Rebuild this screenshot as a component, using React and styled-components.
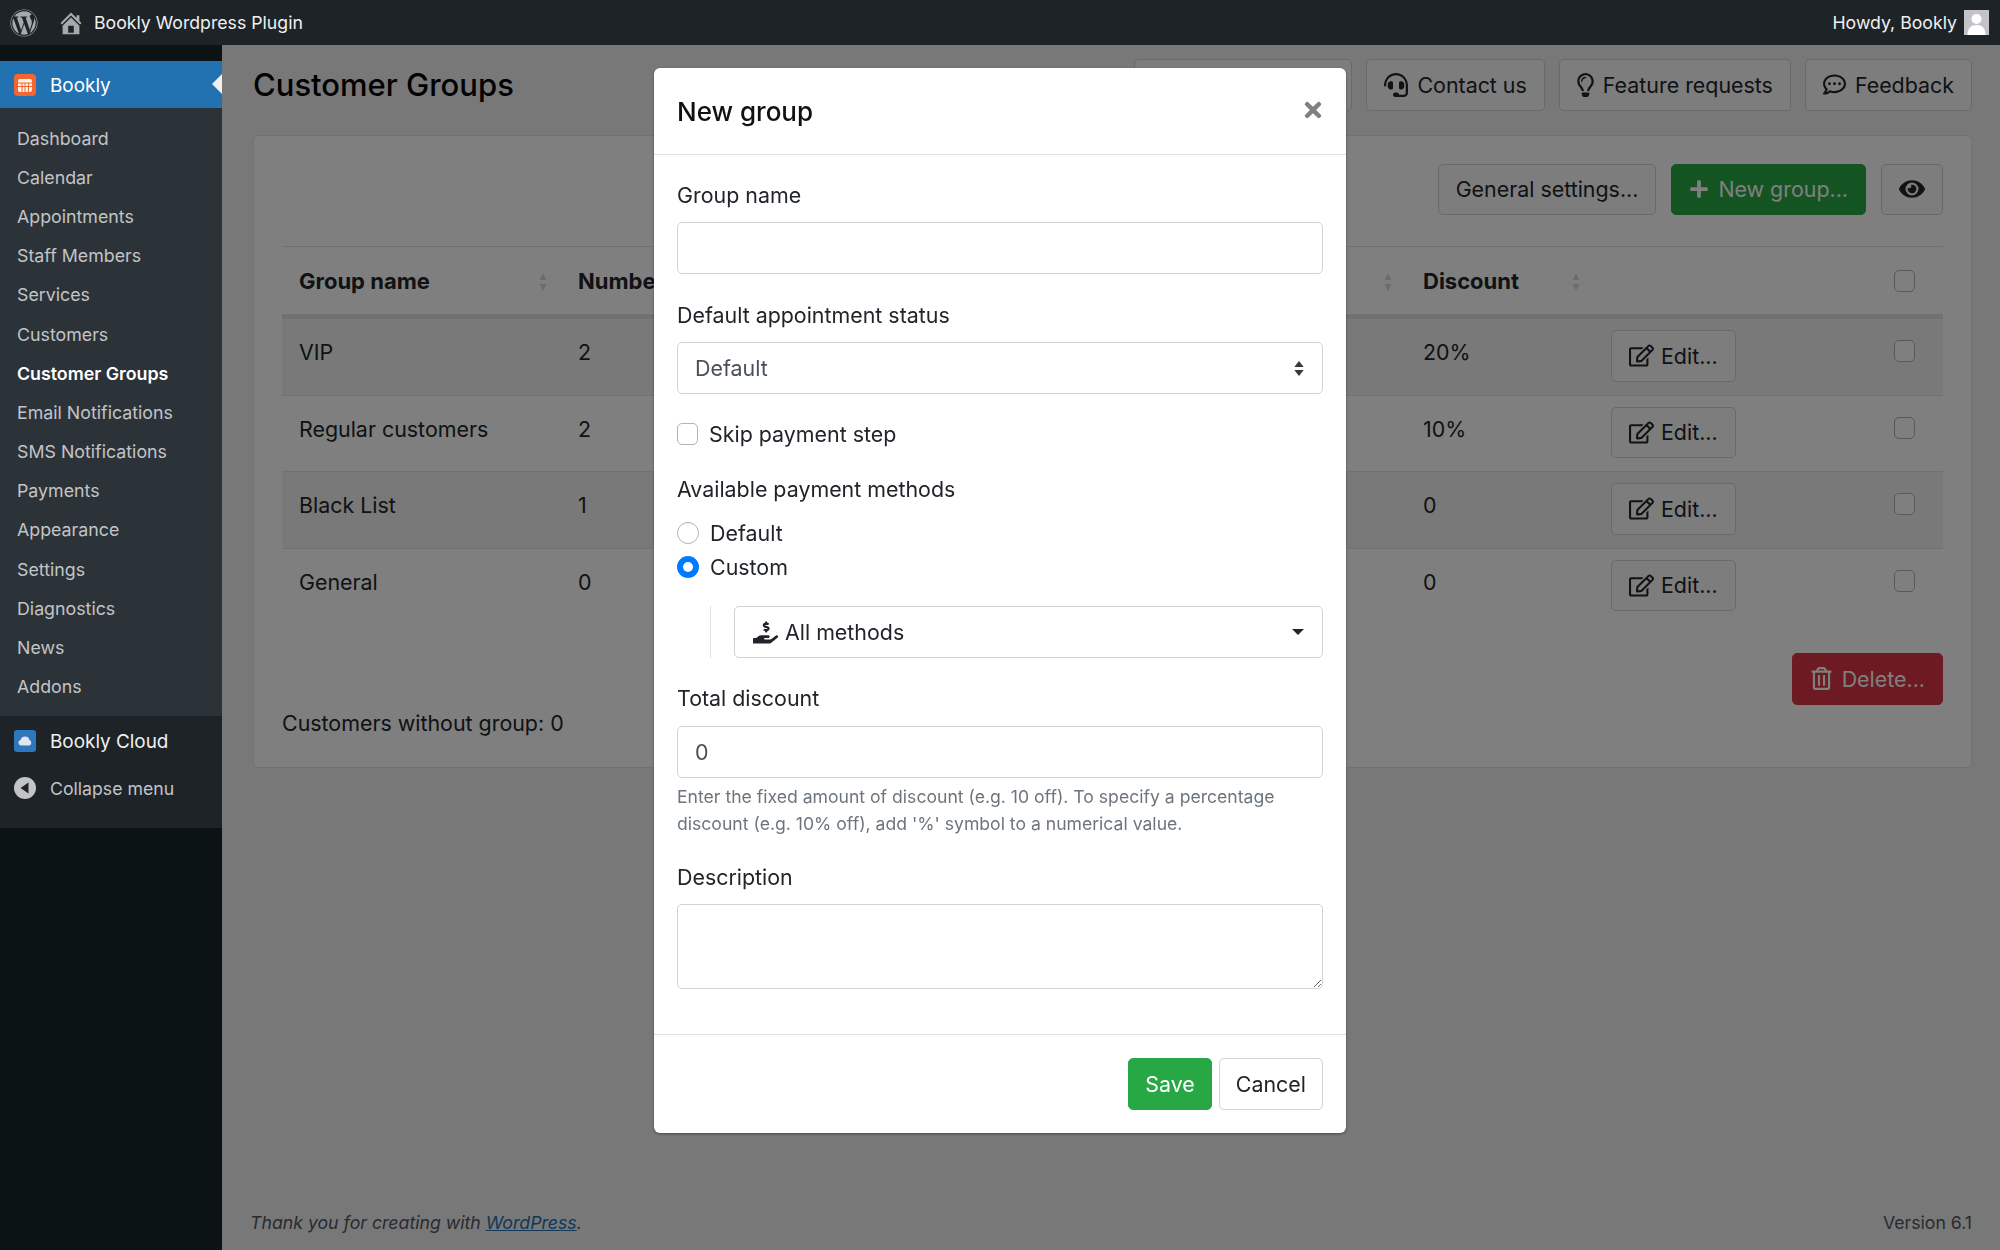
import React from 'react'
import styled, { createGlobalStyle } from 'styled-components'
import {
  FaWordpress, FaHeadset, FaRegLightbulb, FaRegCommentDots, FaEye, FaPlus,
  FaRegEdit, FaRegTrashAlt, FaHandHoldingUsd, FaTimes, FaBook
} from 'react-icons/fa'

const GlobalStyle = createGlobalStyle`
  * { box-sizing: border-box; }
  html, body { margin: 0; padding: 0; }
  body {
    background: #f0f0f1;
    font-family: Inter, "Liberation Sans", sans-serif;
    color: #212529;
    font-size: 21.4px;
  }
`

const Page = styled.div`
  width: 2000px;
  height: 1250px;
  display: flex;
  flex-direction: column;
  overflow: hidden;
`

// top bar
const AdminBar = styled.header`
  height: 45px;
  flex: none;
  background: #1d2327;
  color: #f0f0f1;
  display: flex;
  align-items: center;
  padding: 0 11px 0 10px;
  font-size: 17.7px;
  z-index: 3;
`
const WpLogo = styled(FaWordpress)`
  width: 28px;
  height: 28px;
  color: #a7aaad;
`
const HomeIcon = styled.svg`
  width: 28px;
  height: 28px;
  margin: 0 9px 0 19px;
`
const Howdy = styled.span`
  margin-left: auto;
  margin-right: 7px;
`
const Avatar = styled.span`
  width: 25px;
  height: 25px;
  background: #c3c4c7;
  display: block;
`

const Body = styled.div`
  flex: 1;
  display: flex;
  min-height: 0;
`

// left menu
const Sidebar = styled.aside`
  width: 222px;
  flex: none;
  background: #0c1315;
  padding-top: 16px;
  z-index: 3;
  display: flex;
  flex-direction: column;
`
const TopItem = styled.div`
  height: 47px;
  background: #2271b1;
  color: #fff;
  display: flex;
  align-items: center;
  padding: 1px 0 0 14px;
  gap: 14px;
  font-size: 18.9px;
  position: relative;
  &::after {
    content: '';
    position: absolute;
    right: 0;
    top: 13px;
    border: 10.5px solid transparent;
    border-right-color: #f0f0f1;
    border-left-width: 0;
  }
`
const SubMenu = styled.nav`
  background: #2c3338;
  padding: 10.5px 0 9.5px;
  display: flex;
  flex-direction: column;
`
const SubItem = styled.a`
  height: 39.2px;
  display: flex;
  align-items: center;
  padding-left: 17px;
  font-size: 17.8px;
  color: ${p => (p.$current ? '#fff' : '#c3c4c7')};
  font-weight: ${p => (p.$current ? 600 : 400)};
`
const LowerMenu = styled.div`
  background: #1d2327;
  height: 112px;
  padding-top: 3px;
`
const LowerItem = styled.div`
  height: ${p => (p.$main ? '45px' : '49px')};
  display: flex;
  align-items: center;
  padding-left: 14px;
  gap: 14px;
  font-size: ${p => (p.$main ? '18.9px' : '17.7px')};
  color: ${p => (p.$main ? '#f0f0f1' : '#c3c4c7')};
`
const MenuIcon = styled.svg`
  width: 22px;
  height: 22px;
  flex: none;
`

// main area
const Main = styled.main`
  flex: 1;
  min-width: 0;
  padding: 14px 28px 0 31px;
  display: flex;
  flex-direction: column;
`
const TopRow = styled.div`
  display: flex;
  align-items: center;
  justify-content: space-between;
`
const Title = styled.h1`
  margin: 0;
  font-size: 31px;
  font-weight: 500;
  color: #000;
`
const TopButtons = styled.div`
  display: flex;
  gap: 14px;
`
const Button = styled.button`
  height: 51.5px;
  padding: 0 ${p => p.$pad || 17}px;
  display: inline-flex;
  align-items: center;
  gap: ${p => p.$gap || 9}px;
  font: inherit;
  font-size: 21.4px;
  color: ${p => (p.$variant === 'success' || p.$variant === 'danger' ? '#fff' : '#212529')};
  background: ${p =>
    p.$variant === 'success' ? '#28a745' : p.$variant === 'danger' ? '#dc3545' : p.$variant === 'plain' ? '#fff' : '#fafafa'};
  border: 1px solid ${p =>
    p.$variant === 'success' ? '#28a745' : p.$variant === 'danger' ? '#dc3545' : '#ced4da'};
  border-radius: 5px;
  svg { flex: none; }
`
const BulbIcon = styled(FaRegLightbulb)`
  width: 17px;
  height: 24px;
`
const Card = styled.section`
  margin-top: 24px;
  background: #fff;
  border: 1px solid #dee2e6;
  border-radius: 5px;
  padding: 28px 28px 28px;
`
const Toolbar = styled.div`
  display: flex;
  justify-content: flex-end;
  gap: 15px;
`
const Table = styled.table`
  width: 100%;
  margin-top: 31px;
  border-collapse: separate;
  border-spacing: 0;
  table-layout: fixed;
`
const HeadCell = styled.th`
  height: 72px;
  padding: 0 17px;
  text-align: left;
  font-size: 22px;
  font-weight: 700;
  white-space: nowrap;
  border-top: 1px solid #dee2e6;
  border-bottom: 4px solid #dee2e6;
  position: relative;
`
const Cell = styled.td`
  height: 76.5px;
  padding: 20px 17px 0;
  line-height: 26px;
  vertical-align: top;
  border-top: 1px solid #dee2e6;
`
const ActionCell = styled(Cell)`
  padding-top: 11px;
`
const CheckCell = styled(Cell)`
  padding: 21px 28px 0 0;
`
const Row = styled.tr`
  background: ${p => (p.$odd ? '#f2f2f2' : 'transparent')};
`
const SortMark = styled.svg`
  position: absolute;
  right: 14px;
  top: 25px;
  width: 8px;
  height: 20px;
`
const Checkbox = styled.input.attrs({ type: 'checkbox' })`
  appearance: none;
  display: block;
  width: 21px;
  height: 22px;
  margin: 0;
  background: #fff;
  border: 1px solid #adb5bd;
  border-radius: 5px;
  flex: none;
`
const RightCheck = styled(Checkbox)`
  margin-left: auto;
  margin-right: ${p => p.$inset || 0}px;
`
const BulkRow = styled.div`
  display: flex;
  justify-content: flex-end;
  margin-top: 29px;
`
const Summary = styled.div`
  height: 31px;
  line-height: 31px;
  margin-top: 3px;
`
const PageFooter = styled.footer`
  margin-top: auto;
  margin-left: -3px;
  padding-bottom: 17px;
  display: flex;
  justify-content: space-between;
  font-size: 17.7px;
  color: #50575e;
  em a { color: #2271b1; }
`

// modal
const Backdrop = styled.div`
  position: fixed;
  left: 222px;
  top: 45px;
  right: 0;
  bottom: 0;
  background: rgba(0, 0, 0, 0.5);
  z-index: 1;
`
const ModalLayer = styled.div`
  position: fixed;
  inset: 0;
  display: flex;
  justify-content: center;
  align-items: flex-start;
  padding-top: 68px;
  z-index: 2;
`
const Modal = styled.div`
  width: 692px;
  height: 1065px;
  background: #fff;
  border-radius: 6px;
  display: flex;
  flex-direction: column;
  box-shadow: 0 1px 3px rgba(0, 0, 0, 0.4);
`
const ModalHeader = styled.div`
  height: 87px;
  flex: none;
  padding: 0 23px;
  display: flex;
  align-items: center;
  justify-content: space-between;
  border-bottom: 1px solid #dee2e6;
`
const ModalTitle = styled.h2`
  margin: 0;
  font-size: 26px;
  font-weight: 500;
  color: #111;
`
const CloseIcon = styled(FaTimes)`
  width: 22px;
  height: 24px;
  color: #808080;
  margin-top: -3px;
  margin-right: -1px;
`
const ModalBody = styled.div`
  flex: 1;
  padding: 24.5px 23px 0;
`
const Label = styled.div`
  height: 31px;
  line-height: 31px;
  margin-bottom: ${p => p.$gap ?? 11.5}px;
`
const Group = styled.div`
  margin-bottom: ${p => p.$gap ?? 25.5}px;
`
const Control = styled.input`
  display: block;
  width: 100%;
  height: 52px;
  padding: 0 17px;
  font: inherit;
  color: #495057;
  background: #fff;
  border: 1px solid #ced4da;
  border-radius: 5px;
`
const Select = styled.select`
  display: block;
  width: 100%;
  height: 52px;
  padding: 0 17px;
  font: inherit;
  color: #495057;
  appearance: none;
  border: 1px solid #ced4da;
  border-radius: 5px;
  background: #fff url("data:image/svg+xml,%3csvg xmlns='http://www.w3.org/2000/svg' viewBox='0 0 10 16'%3e%3cpath fill='%23343a40' d='M5 0 10 6.5H0zM5 16 0 9.5h10z'/%3e%3c/svg%3e") no-repeat right 18px center / 10px 15px;
`
const CheckLine = styled.label`
  height: 27px;
  margin-top: ${p => p.$top || 0}px;
  display: flex;
  align-items: center;
  gap: 11px;
`
const Radio = styled.input.attrs({ type: 'radio' })`
  appearance: none;
  display: block;
  width: 22px;
  height: 22px;
  margin: 0;
  flex: none;
  border-radius: 50%;
  background: #fff;
  border: 1px solid #adb5bd;
  &:checked {
    background: #fff;
    border: 6.5px solid #007bff;
  }
`
const Indented = styled.div`
  display: flex;
  margin: 25.5px 0 24.5px 33px;
  padding-left: 23px;
  border-left: 1px solid #dee2e6;
`
const DropdownButton = styled.button`
  width: 100%;
  height: 52px;
  padding: 0 18px;
  display: flex;
  align-items: center;
  gap: 7px;
  font: inherit;
  color: #212529;
  background: #fff;
  border: 1px solid #ced4da;
  border-radius: 5px;
  &::after {
    content: '';
    margin-left: auto;
    border-top: 6px solid #212529;
    border-left: 6px solid transparent;
    border-right: 6px solid transparent;
  }
`
const Hint = styled.p`
  margin: 6px 0 0;
  font-size: 17.6px;
  line-height: 26.6px;
  color: #6c757d;
`
const TextArea = styled.textarea`
  display: block;
  width: 100%;
  height: 85px;
  font: inherit;
  border: 1px solid #ced4da;
  border-radius: 5px;
`
const ModalFooter = styled.div`
  height: 99px;
  flex: none;
  padding: 23px 23px 0;
  display: flex;
  justify-content: flex-end;
  align-items: flex-start;
  gap: 7px;
  border-top: 1px solid #dee2e6;
`

const Sort = () => (
  <SortMark viewBox="0 0 8 20">
    <path fill="#d8d8d8" d="M4 1 7.5 8H.5zM4 19 .5 12h7z" />
  </SortMark>
)

const BooklyIcon = () => (
  <MenuIcon viewBox="0 0 22 22">
    <rect width="22" height="22" rx="4" fill="#f4662f" />
    <rect x="4" y="5" width="14" height="13" rx="2" fill="#fff" opacity="0.9" />
    <path stroke="#f4662f" strokeWidth="1" d="M4 9h14M4 12.5h14M8 9v9M11 9v9M14.5 9v9" />
  </MenuIcon>
)
const CloudIcon = () => (
  <MenuIcon viewBox="0 0 22 22">
    <rect width="22" height="22" rx="3" fill="#2f77bc" />
    <path fill="#dfe6ee" d="M7 15.5a2.8 2.8 0 0 1-.5-5.5A4.6 4.6 0 0 1 11 6.5a4.3 4.3 0 0 1 4.4 3.6 2.8 2.8 0 0 1-.4 5.4z" />
  </MenuIcon>
)
const CollapseIcon = () => (
  <MenuIcon viewBox="0 0 22 22">
    <circle cx="11" cy="11" r="11" fill="#c3c4c7" />
    <path fill="#1d2327" d="M14.5 5.5v11L6.5 11z" />
  </MenuIcon>
)
const AvatarIcon = () => (
  <svg viewBox="0 0 25 25" width="25" height="25">
    <circle cx="12.5" cy="9" r="5" fill="#fff" />
    <path fill="#fff" d="M3.5 25c0-7 3.5-10 9-10s9 3 9 10z" />
  </svg>
)

const menu = [
  'Dashboard', 'Calendar', 'Appointments', 'Staff Members', 'Services', 'Customers', 'Customer Groups',
  'Email Notifications', 'SMS Notifications', 'Payments', 'Appearance', 'Settings', 'Diagnostics', 'News', 'Addons'
]

const groups = [
  { name: 'VIP', users: 2, discount: '20%' },
  { name: 'Regular customers', users: 2, discount: '10%' },
  { name: 'Black List', users: 1, discount: '0' },
  { name: 'General', users: 0, discount: '0' }
]

export default function App() {
  return (
    <Page>
      <GlobalStyle />
      <AdminBar>
        <WpLogo />
        <HomeIcon viewBox="0 0 20 20">
          <path fill="#a7aaad" d="M16 8.5l1.53 1.53-1.06 1.06L10 4.62l-6.47 6.47-1.06-1.06L10 2.5l4 4v-2h2v4zm-6-2.46l6 5.99V18H4v-5.97zM12 17v-5H8v5h4z" />
        </HomeIcon>
        <span>Bookly Wordpress Plugin</span>
        <Howdy>Howdy, Bookly</Howdy>
        <Avatar><AvatarIcon /></Avatar>
      </AdminBar>
      <Body>
        <Sidebar>
          <TopItem><BooklyIcon />Bookly</TopItem>
          <SubMenu>
            {menu.map(item => (
              <SubItem key={item} $current={item === 'Customer Groups'}>{item}</SubItem>
            ))}
          </SubMenu>
          <LowerMenu>
            <LowerItem $main><CloudIcon />Bookly Cloud</LowerItem>
            <LowerItem><CollapseIcon />Collapse menu</LowerItem>
          </LowerMenu>
        </Sidebar>
        <Main>
          <TopRow>
            <Title>Customer Groups</Title>
            <TopButtons>
              <Button><FaBook size={20} />Documentation</Button>
              <Button><FaHeadset size={24} />Contact us</Button>
              <Button><BulbIcon />Feature requests</Button>
              <Button><FaRegCommentDots size={23} />Feedback</Button>
            </TopButtons>
          </TopRow>
          <Card>
            <Toolbar>
              <Button>General settings...</Button>
              <Button $variant="success"><FaPlus size={20} />New group...</Button>
              <Button><FaEye size={26} /></Button>
            </Toolbar>
            <Table>
              <colgroup>
                <col style={{ width: 279 }} />
                <col style={{ width: 340 }} />
                <col style={{ width: 505 }} />
                <col style={{ width: 188 }} />
                <col />
                <col style={{ width: 66 }} />
              </colgroup>
              <thead>
                <tr>
                  <HeadCell>Group name<Sort /></HeadCell>
                  <HeadCell>Number of users<Sort /></HeadCell>
                  <HeadCell><Sort /></HeadCell>
                  <HeadCell>Discount<Sort /></HeadCell>
                  <HeadCell />
                  <HeadCell><RightCheck $inset={11} /></HeadCell>
                </tr>
              </thead>
              <tbody>
                {groups.map((g, i) => (
                  <Row key={g.name} $odd={i % 2 === 0}>
                    <Cell>{g.name}</Cell>
                    <Cell>{g.users}</Cell>
                    <Cell />
                    <Cell>{g.discount}</Cell>
                    <ActionCell><Button $gap={7}><FaRegEdit size={25} />Edit...</Button></ActionCell>
                    <CheckCell><RightCheck /></CheckCell>
                  </Row>
                ))}
              </tbody>
            </Table>
            <BulkRow>
              <Button $variant="danger"><FaRegTrashAlt size={23} />Delete...</Button>
            </BulkRow>
            <Summary>Customers without group: 0</Summary>
          </Card>
          <PageFooter>
            <em>Thank you for creating with <a href="#">WordPress</a>.</em>
            <span>Version 6.1</span>
          </PageFooter>
        </Main>
      </Body>
      <Backdrop />
      <ModalLayer>
        <Modal>
          <ModalHeader>
            <ModalTitle>New group</ModalTitle>
            <CloseIcon />
          </ModalHeader>
          <ModalBody>
            <Group>
              <Label>Group name</Label>
              <Control />
            </Group>
            <Group $gap={26.5}>
              <Label>Default appointment status</Label>
              <Select defaultValue="default"><option value="default">Default</option></Select>
            </Group>
            <Group $gap={26}>
              <CheckLine><Checkbox />Skip payment step</CheckLine>
            </Group>
            <Label $gap={15}>Available payment methods</Label>
            <CheckLine><Radio name="pay" />Default</CheckLine>
            <CheckLine $top={7}><Radio name="pay" defaultChecked />Custom</CheckLine>
            <Indented>
              <DropdownButton><FaHandHoldingUsd size={25} />All methods</DropdownButton>
            </Indented>
            <Group $gap={24.5}>
              <Label $gap={12.5}>Total discount</Label>
              <Control defaultValue="0" />
              <Hint>Enter the fixed amount of discount (e.g. 10 off). To specify a percentage discount (e.g. 10% off), add '%' symbol to a numerical value.</Hint>
            </Group>
            <Group>
              <Label>Description</Label>
              <TextArea />
            </Group>
          </ModalBody>
          <ModalFooter>
            <Button $variant="success" $pad={16}>Save</Button>
            <Button $variant="plain" $pad={16}>Cancel</Button>
          </ModalFooter>
        </Modal>
      </ModalLayer>
    </Page>
  )
}
